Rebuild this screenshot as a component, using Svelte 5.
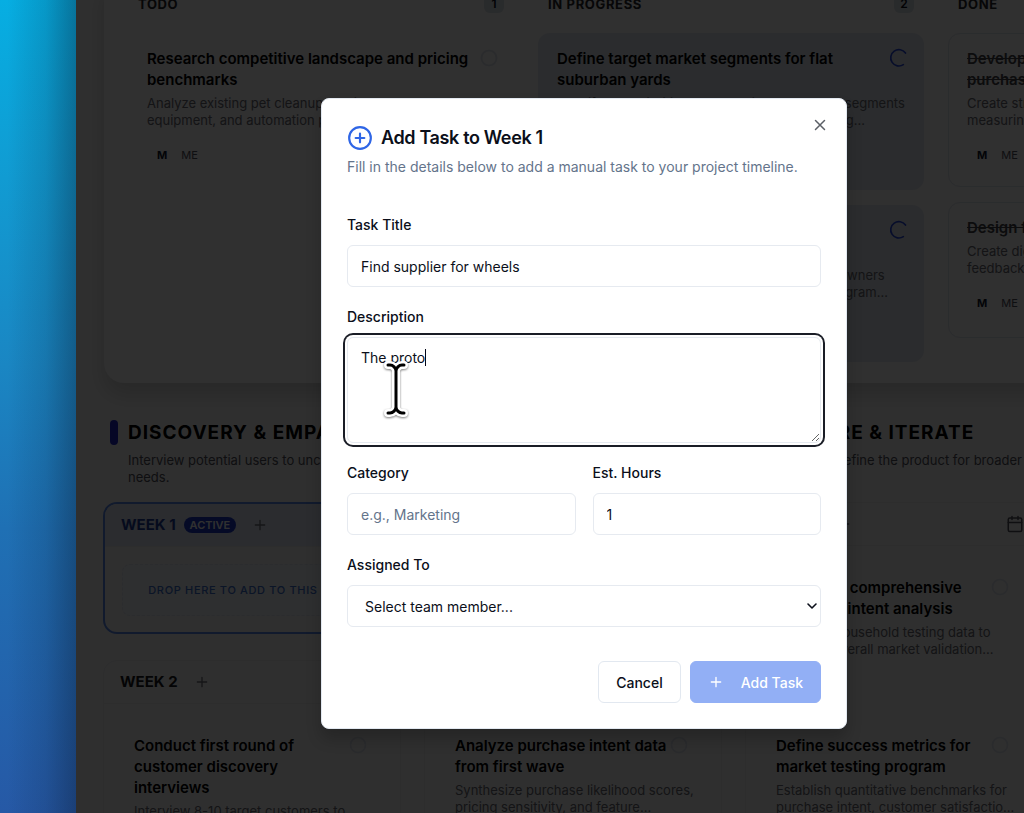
<script lang="ts">
	import { onMount } from 'svelte';

	type Task = { title: string; text: string[]; owner?: string };

	const lanes: { name: string; kind: string; count: number; tasks: Task[] }[] = [
		{
			name: 'Todo',
			kind: 'todo',
			count: 1,
			tasks: [
				{
					title: 'Research competitive landscape and pricing benchmarks',
					text: ['Analyze existing pet cleanup services,', 'equipment, and automation products'],
					owner: 'ME'
				}
			]
		},
		{
			name: 'In progress',
			kind: 'progress',
			count: 2,
			tasks: [
				{
					title: 'Define target market segments for flat suburban yards',
					text: ['Identify and prioritize the most likely customer segments', 'by yard sizes, pet counts, and cleanup spending...'],
					owner: 'ME'
				},
				{
					title: 'Recruit local pet owners as testers for early access program',
					text: ['Contact and screen a small group of local pet owners', 'who are willing to join the early access trial program...'],
					owner: 'ME'
				}
			]
		},
		{
			name: 'Done',
			kind: 'done',
			count: 2,
			tasks: [
				{
					title: 'Develop customer survey to measure purchase intent',
					text: ['Create structured survey questions for', 'measuring interest and likelihood to buy'],
					owner: 'ME'
				},
				{
					title: 'Design feedback collection forms',
					text: ['Create digital forms that collect user', 'feedback after each product trial'],
					owner: 'ME'
				}
			]
		}
	];

	const phases: {
		name: string;
		text: string;
		weeks: { name: string; active?: boolean; tasks: Task[] }[];
	}[] = [
		{
			name: 'Discovery & Empathy',
			text: 'Interview potential users to uncover their needs.',
			weeks: [
				{ name: 'Week 1', active: true, tasks: [] },
				{
					name: 'Week 2',
					tasks: [
						{
							title: 'Conduct first round of customer discovery interviews',
							text: ['Interview 8-10 target customers to', 'understand cleanup habits...']
						}
					]
				}
			]
		},
		{
			name: 'Define & Test',
			text: 'Turn what users said into a clear offer and test it.',
			weeks: [
				{ name: 'Week 3', active: true, tasks: [] },
				{
					name: 'Week 4',
					tasks: [
						{
							title: 'Analyze purchase intent data from first wave',
							text: ['Synthesize purchase likelihood scores,', 'pricing sensitivity, and feature...']
						}
					]
				}
			]
		},
		{
			name: 'Explore & Iterate',
			text: 'Adjust and refine the product for broader use.',
			weeks: [
				{
					name: 'Week 5',
					tasks: [
						{
							title: 'Complete comprehensive purchase intent analysis',
							text: ['Organize household testing data to', 'measure overall market validation...']
						},
						{
							title: 'Define success metrics for market testing program',
							text: ['Establish quantitative benchmarks for', 'purchase intent, customer satisfactio...']
						}
					]
				}
			]
		}
	];

	let title = $state('Find supplier for wheels');
	let description = $state('The proto');
	let category = $state('');
	let hours = $state('1');
	let assignee = $state('');
	let caretLeft = $state(0);
	let descriptionBox: HTMLTextAreaElement;

	// solid caret after the last typed character
	function placeCaret() {
		const ctx = document.createElement('canvas').getContext('2d');
		if (!ctx) return;
		const style = getComputedStyle(descriptionBox);
		ctx.font = style.font;
		const lastLine = description.split('\n').pop() ?? '';
		caretLeft = parseFloat(style.paddingLeft) + 1 + Math.round(ctx.measureText(lastLine).width);
	}

	onMount(() => {
		descriptionBox.focus();
		descriptionBox.setSelectionRange(description.length, description.length);
		placeCaret();
	});
</script>

{#snippet plus(size: number)}
	<svg width={size} height={size} viewBox="0 0 24 24" fill="none" stroke="currentColor" stroke-width="2" stroke-linecap="round">
		<path d="M5 12h14M12 5v14" />
	</svg>
{/snippet}

{#snippet taskCard(task: Task, kind: string)}
	<article class="task {kind}">
		<div class="task-head">
			<h4>{task.title}</h4>
			{#if kind !== 'done'}
				<svg class="status" width="20" height="20" viewBox="0 0 24 24" fill="none" stroke="currentColor" stroke-width="2" stroke-linecap="round">
					{#if kind === 'progress'}
						<path d="M19.8 6A9.8 9.8 0 1 0 17.2 20" />
					{:else}
						<circle cx="12" cy="12" r="9" />
					{/if}
				</svg>
			{/if}
		</div>
		<p>
			{#each task.text as line}<span>{line}</span>{/each}
		</p>
		{#if task.owner}
			<div class="owner"><b>M</b><span>{task.owner}</span></div>
		{/if}
	</article>
{/snippet}

<div class="desktop">
	<div class="wallpaper"></div>
	<div class="window">
		<main inert>
			<section class="board">
				{#each lanes as lane}
					<div class="lane">
						<header>
							<h3>{lane.name}</h3>
							<span class="count">{lane.count}</span>
						</header>
						{#each lane.tasks as task}
							{@render taskCard(task, lane.kind)}
						{/each}
					</div>
				{/each}
			</section>

			<section class="phases">
				{#each phases as phase}
					<div class="phase">
						<header>
							<h2>{phase.name}</h2>
							<p>{phase.text}</p>
						</header>
						{#each phase.weeks as week}
							<section class="week" class:active={week.active}>
								<header>
									<h3>{week.name}</h3>
									{#if week.active}<span class="tag">Active</span>{/if}
									<button class="add" aria-label="Add task to {week.name}">{@render plus(16)}</button>
									<svg class="calendar" width="18" height="18" viewBox="0 0 24 24" fill="none" stroke="currentColor" stroke-width="2" stroke-linecap="round" stroke-linejoin="round">
										<rect x="3" y="4" width="18" height="18" rx="2" />
										<path d="M8 2v4M16 2v4M3 10h18" />
									</svg>
								</header>
								<div class="week-body">
									{#each week.tasks as task}
										{@render taskCard(task, 'planned')}
									{:else}
										<div class="drop">Drop here to add to this week</div>
									{/each}
								</div>
							</section>
						{/each}
					</div>
				{/each}
			</section>
		</main>

		<div class="backdrop">
			<div class="dialog" role="dialog" aria-modal="true" aria-labelledby="dialog-title">
				<button class="close" aria-label="Close">
					<svg width="18" height="18" viewBox="0 0 24 24" fill="none" stroke="currentColor" stroke-width="2" stroke-linecap="round">
						<path d="M18 6 6 18M6 6l12 12" />
					</svg>
				</button>
				<div class="dialog-head">
					<h2 id="dialog-title">
						<svg width="26" height="26" viewBox="0 0 24 24" fill="none" stroke="currentColor" stroke-width="2" stroke-linecap="round">
							<circle cx="12" cy="12" r="10" />
							<path d="M8 12h8M12 8v8" />
						</svg>
						Add Task to Week 1
					</h2>
					<p>Fill in the details below to add a manual task to your project timeline.</p>
				</div>

				<form onsubmit={(e) => e.preventDefault()}>
					<div class="field">
						<label for="title">Task Title</label>
						<input id="title" type="text" bind:value={title} />
					</div>
					<div class="field">
						<label for="description">Description</label>
						<div class="over">
							<textarea id="description" bind:this={descriptionBox} bind:value={description} oninput={placeCaret}></textarea>
							<span class="caret" style="left: {caretLeft}px"></span>
							<svg class="pointer" width="32" height="64" viewBox="0 0 32 64" fill="none" stroke-linecap="round" stroke-linejoin="round">
								<path d="M8 8h2c3 0 6 3 6 6 0-3 3-6 6-6h2M16 14v36M8 56h2c3 0 6-3 6-6 0 3 3 6 6 6h2" stroke="#fff" stroke-width="8" />
								<path d="M8 8h2c3 0 6 3 6 6 0-3 3-6 6-6h2M16 14v36M8 56h2c3 0 6-3 6-6 0 3 3 6 6 6h2" stroke="#000" stroke-width="3" />
							</svg>
						</div>
					</div>
					<div class="pair">
						<div class="field">
							<label for="category">Category</label>
							<input id="category" type="text" placeholder="e.g., Marketing" bind:value={category} />
						</div>
						<div class="field">
							<label for="hours">Est. Hours</label>
							<input id="hours" type="text" inputmode="numeric" bind:value={hours} />
						</div>
					</div>
					<div class="field">
						<label for="assignee">Assigned To</label>
						<div class="over">
							<select id="assignee" bind:value={assignee}>
								<option value="">Select team member...</option>
								<option value="me">ME</option>
							</select>
							<svg class="chevron" width="12" height="12" viewBox="0 0 12 12" fill="none" stroke="currentColor" stroke-width="1.6" stroke-linecap="round" stroke-linejoin="round">
								<path d="M2 4l4 4 4-4" />
							</svg>
						</div>
					</div>
					<div class="actions">
						<button type="button" class="cancel">Cancel</button>
						<button type="submit" class="submit" disabled>{@render plus(16)} Add Task</button>
					</div>
				</form>
			</div>
		</div>
	</div>
</div>

<style>
	:global(body) {
		margin: 0;
		background: #303030;
	}

	.desktop {
		display: flex;
		height: 100vh;
		overflow: hidden;
		font-family: Inter, 'Liberation Sans', sans-serif;
		color: #0b0f1a;
	}

	.desktop :is(h2, h3, h4, p) {
		margin: 0;
	}

	button,
	input,
	textarea,
	select {
		font: inherit;
		color: inherit;
		box-sizing: border-box;
	}

	svg {
		display: block;
		flex-shrink: 0;
	}

	.wallpaper {
		flex: 0 0 76px;
		background:
			linear-gradient(90deg, transparent 10%, rgba(8, 20, 40, 0.14) 60%, rgba(8, 20, 40, 0.38)),
			linear-gradient(#06aee2, #119bd2 22%, #1a86c3 45%, #1f70b4 65%, #2659a6);
	}

	.window {
		position: relative;
		flex: 0 0 calc(100% - 8px);
		overflow: hidden;
		background: #f9f9f9;
	}

	main {
		width: max-content;
		padding: 0 28px;
	}

	/* kanban */
	.board {
		display: grid;
		grid-template-columns: repeat(3, 394px);
		gap: 16px;
		height: 371px;
		margin-top: -24px;
		padding: 18px 24px;
		border-radius: 20px;
		background: #fbfbfc;
		box-shadow: 0 12px 20px rgba(0, 0, 0, 0.15);
	}

	.lane header {
		display: flex;
		align-items: center;
		justify-content: space-between;
		height: 20px;
		padding: 0 18px 0 10px;
		margin-bottom: 19px;
	}

	.lane h3 {
		font-size: 13px;
		font-weight: 700;
		letter-spacing: 0.05em;
		text-transform: uppercase;
		color: #27272a;
	}

	.count {
		width: 20px;
		border-radius: 6px;
		background: #dbe3ea;
		font-size: 12px;
		font-weight: 600;
		line-height: 18px;
		text-align: center;
	}

	.task {
		box-sizing: border-box;
		border: 1px solid transparent;
		border-radius: 12px;
	}

	.lane .task {
		width: 386px;
		min-height: 154px;
		margin-bottom: 15px;
		padding: 14px 14px 14px 18px;
	}

	.lane .progress {
		min-height: 157px;
		background: #e2e9f1;
	}

	.lane .done {
		border-color: #e0e6ee;
	}

	.lane .done:last-child {
		min-height: 136px;
	}

	.task-head {
		display: flex;
		justify-content: space-between;
	}

	.task h4 {
		max-width: 330px;
		font-size: 15px;
		font-weight: 600;
		line-height: 21px;
		color: #000;
	}

	.progress h4 {
		max-width: 285px;
	}

	.status {
		color: #dde2ec;
	}

	.progress .status {
		color: #2547e0;
		overflow: visible;
	}

	.done h4 {
		color: #3f3f46;
		text-decoration: line-through;
	}

	.task p {
		margin-top: 5px;
		font-size: 13px;
		line-height: 17px;
		color: #6b6b73;
		white-space: nowrap;
	}

	.task p span {
		display: block;
	}

	.owner {
		display: flex;
		gap: 14px;
		margin: 18px 0 0 10px;
		font-size: 11px;
		line-height: 16px;
		color: #52525b;
	}

	.owner b {
		color: #0f172a;
	}

	/* timeline */
	.phases {
		display: grid;
		grid-template-columns: repeat(3, 298px);
		gap: 23px;
		margin: 34px 0 0 -1px;
	}

	.phase > header {
		height: 85px;
		padding-left: 25px;
	}

	.phase h2 {
		font-size: 19px;
		font-weight: 700;
		line-height: 32px;
		letter-spacing: 1px;
		text-transform: uppercase;
		white-space: nowrap;
		color: #000;
	}

	.phase h2::before {
		content: '';
		float: left;
		width: 8px;
		height: 25px;
		margin: 3px 0 0 -18px;
		border-radius: 4px;
		background: #2028c8;
	}

	.phase > header p {
		margin-top: 3px;
		font-size: 13px;
		line-height: 17px;
		color: #52525b;
	}

	.week {
		border: 1px solid #ececf0;
		border-radius: 14px;
		margin-bottom: 26px;
		overflow: hidden;
	}

	.week.active {
		border: 2px solid #5c8cf0;
	}

	.week > header {
		display: flex;
		align-items: center;
		height: 42px;
		padding: 0 18px 0 16px;
		border-bottom: 1px solid #ececf0;
	}

	.week.active > header {
		background: #e2eaf6;
	}

	.week h3 {
		font-size: 15px;
		font-weight: 700;
		line-height: 20px;
		text-transform: uppercase;
		color: #18181b;
	}

	.week.active h3 {
		color: #1e3a9a;
	}

	.tag {
		margin-left: 8px;
		padding: 0 6px;
		border-radius: 8px;
		background: #1d37c8;
		font-size: 11px;
		font-weight: 600;
		line-height: 16px;
		text-transform: uppercase;
		color: #fff;
	}

	.add {
		margin-left: 16px;
		padding: 0;
		border: 0;
		background: none;
		color: #71717a;
	}

	.calendar {
		margin-left: auto;
		color: #52525b;
	}

	.week-body {
		padding: 17px 17px 16px;
	}

	.week .task {
		padding: 13px 14px 13px 12px;
		min-height: 140px;
		margin-bottom: 18px;
	}

	.week .task h4 {
		max-width: 214px;
	}

	.drop {
		border: 1px dashed #e2e8f4;
		border-radius: 8px;
		background: #f3f6fb;
		font-size: 11px;
		font-weight: 500;
		line-height: 50px;
		letter-spacing: 0.06em;
		text-align: center;
		text-transform: uppercase;
		white-space: nowrap;
		color: #3b6fd0;
	}

	/* dialog */
	.backdrop {
		position: absolute;
		inset: 0;
		display: flex;
		align-items: center;
		justify-content: center;
		padding-top: 14px;
		background: rgba(0, 0, 0, 0.81);
	}

	.dialog {
		position: relative;
		box-sizing: border-box;
		width: 526px;
		padding: 25px;
		border: 1px solid #e2e8f0;
		border-radius: 8px;
		background: #fff;
		font-size: 14px;
		box-shadow: 0 10px 15px rgba(0, 0, 0, 0.2);
	}

	.close {
		position: absolute;
		top: 17px;
		right: 17px;
		padding: 0;
		border: 0;
		background: none;
		color: #5b5f66;
	}

	.dialog-head {
		margin-bottom: 37px;
	}

	.dialog h2 {
		display: flex;
		align-items: center;
		gap: 8px;
		font-size: 18px;
		font-weight: 600;
		line-height: 28px;
		letter-spacing: -0.02em;
	}

	.dialog h2 svg {
		color: #2f66e6;
	}

	.dialog-head p {
		margin-top: 4px;
		line-height: 22px;
		color: #64748b;
	}

	form,
	.field {
		display: flex;
		flex-direction: column;
	}

	form {
		gap: 20px;
	}

	.field {
		gap: 10px;
	}

	label {
		font-weight: 500;
		line-height: 20px;
	}

	input,
	textarea,
	select {
		display: block;
		width: 100%;
		height: 42px;
		padding: 0 13px;
		border: 1px solid #e6eaf0;
		border-radius: 6px;
		background: #fff;
		outline: none;
	}

	textarea {
		height: 106px;
		padding: 9px 13px;
		line-height: 21px;
		resize: vertical;
		caret-color: transparent;
	}

	textarea:focus {
		box-shadow:
			0 0 0 2px #fff,
			0 0 0 4px #1a1d26;
	}

	.caret {
		position: absolute;
		top: 12px;
		width: 1px;
		height: 17px;
		background: #020617;
		pointer-events: none;
	}

	input::placeholder {
		color: #64748b;
	}

	select {
		padding: 0 17px;
		appearance: none;
	}

	.over {
		position: relative;
	}

	.chevron {
		position: absolute;
		top: 15px;
		right: 3px;
		pointer-events: none;
	}

	.pointer {
		position: absolute;
		top: 20px;
		left: 33px;
		filter: drop-shadow(0 1px 1px rgba(0, 0, 0, 0.5));
		pointer-events: none;
	}

	.pair {
		display: grid;
		grid-template-columns: 1fr 1fr;
		gap: 17px;
	}

	.actions {
		display: flex;
		justify-content: flex-end;
		gap: 9px;
		margin-top: 14px;
	}

	.actions button {
		display: flex;
		align-items: center;
		gap: 17px;
		height: 42px;
		padding: 0 17px;
		border: 1px solid #e2e8f0;
		border-radius: 6px;
		background: #fff;
		font-weight: 500;
	}

	.actions .submit {
		border-color: #92aff5;
		background: #92aff5;
		color: #fff;
	}
</style>
